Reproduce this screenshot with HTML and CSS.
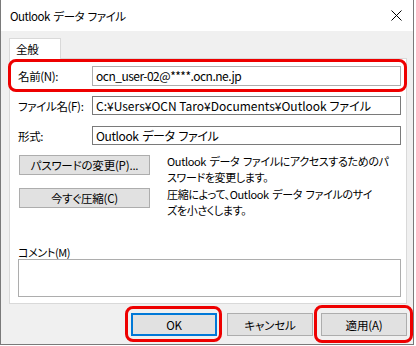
FILE: index.html
```html
<!DOCTYPE html>
<html lang="ja">
<head>
    <meta charset="UTF-8">
    <title>Outlook データ ファイル</title>
    <link rel="stylesheet" href="styles.css">
</head>
<body>
    <div class="window">
        <div class="titlebar">
            <span class="title">Outlook データ ファイル</span>
            <svg class="close" width="11" height="11" viewBox="0 0 11 11">
                <path d="M0.5 0.5 L10.5 10.5 M10.5 0.5 L0.5 10.5" stroke="#000" stroke-width="1" fill="none"/>
            </svg>
        </div>
        <div class="content">
            <div class="tabs">
                <div class="tab">全般</div>
            </div>
            <div class="panel">
                <div class="row marked">
                    <label class="label">名前(N):</label>
                    <div class="field field-name">ocn_user-02@****.ocn.ne.jp</div>
                </div>
                <div class="row row-file">
                    <label class="label">ファイル名(F):</label>
                    <div class="field">C:¥Users¥OCN Taro¥Documents¥Outlook ファイル</div>
                </div>
                <div class="row">
                    <label class="label">形式:</label>
                    <div class="field field-type">Outlook データ ファイル</div>
                </div>
                <div class="action">
                    <button class="btn btn-wide">パスワードの変更(P)...</button>
                    <p class="note">Outlook データ ファイルにアクセスするためのパ<br>スワードを変更します。</p>
                </div>
                <div class="action">
                    <button class="btn btn-wide">今すぐ圧縮(C)</button>
                    <p class="note">圧縮によって、Outlook データ ファイルのサイ<br>ズを小さくします。</p>
                </div>
                <div class="comment">
                    <label class="comment-label">コメント(M)</label>
                    <div class="textarea"></div>
                </div>
            </div>
            <div class="footer">
                <button class="btn btn-foot btn-default marked">OK</button>
                <button class="btn btn-foot">キャンセル</button>
                <button class="btn btn-foot marked">適用(A)</button>
            </div>
        </div>
    </div>
</body>
</html>
```

FILE: styles.css
```css
body {
    margin: 0;
    padding: 0;
    background-color: #ffffff;
    font-family: "Noto Sans CJK JP", sans-serif;
    font-feature-settings: "palt";
    font-size: 11px;
    letter-spacing: -0.35px;
    word-spacing: 1.5px;
    line-height: 16px;
    color: #000;
}

.window {
    width: 412px;
    height: 344px;
    border: 1px solid #7a7a7a;
    border-top: none;
    background-color: #f0f0f0;
    display: flex;
    flex-direction: column;
    overflow: hidden;
}

.titlebar {
    display: flex;
    justify-content: space-between;
    align-items: center;
    height: 31px;
    padding: 0 11px 0 9px;
    background-color: #fff;
    flex-shrink: 0;
}

.title {
    font-size: 11.5px;
    letter-spacing: -0.5px;
}

.content {
    display: flex;
    flex-direction: column;
    padding: 7px 6px 0 8px;
}

.tabs {
    display: flex;
    height: 20px;
}

.tab {
    width: 44px;
    padding-left: 6px;
    line-height: 20px;
    font-size: 11.5px;
    background-color: #fff;
    border: 1px solid #d9d9d9;
    border-bottom: none;
    position: relative;
    z-index: 1;
    margin-bottom: -1px;
}

.panel {
    display: flex;
    flex-direction: column;
    height: 246px;
    box-sizing: border-box;
    background-color: #fff;
    border: 1px solid #d9d9d9;
    padding: 7px 5px 0 8px;
}

.row {
    display: flex;
    align-items: center;
    margin-bottom: 10px;
    position: relative;
}

.row-file {
    margin-bottom: 11px;
}

.row.marked::after {
    content: '';
    position: absolute;
    left: -10px;
    right: -6px;
    top: -7px;
    bottom: -6px;
    border: 3px solid #ee0000;
    border-radius: 8px;
}

.label {
    width: 74px;
    flex-shrink: 0;
    white-space: nowrap;
    font-size: 11.5px;
}

.field {
    flex: 1;
    min-width: 0;
    height: 17px;
    line-height: 17px;
    font-size: 12px;
    letter-spacing: 0;
    word-spacing: 0;
    border: 1px solid #7a7a7a;
    padding: 0 3px;
    white-space: nowrap;
    overflow: hidden;
}

.field-name {
    height: 18px;
    line-height: 18px;
    letter-spacing: -0.5px;
    border-color: #adadad;
}

.field-type {
    letter-spacing: -0.4px;
    word-spacing: 1.5px;
}

.action {
    display: flex;
    align-items: flex-start;
    height: 33px;
}

.btn {
    font-family: inherit;
    font-feature-settings: "palt";
    font-size: 11.5px;
    letter-spacing: -0.2px;
    line-height: 16px;
    color: #000;
    background-color: #e1e1e1;
    border: 1px solid #adadad;
    padding: 0;
    position: relative;
}

.btn-wide {
    width: 131px;
    height: 20px;
    margin: 0 17px 0 1px;
    flex-shrink: 0;
}

.note {
    margin: -2px 0 0 0;
    white-space: nowrap;
}

.comment {
    display: flex;
    flex-direction: column;
    margin-top: 24px;
}

.comment-label {
    line-height: 14px;
}

.textarea {
    height: 36px;
    border: 1px solid #adadad;
}

.footer {
    display: flex;
    justify-content: flex-end;
    gap: 8px;
    padding: 9px 0 0 0;
}

.btn-foot {
    width: 86px;
    height: 23px;
}

.btn-default {
    border: 2px solid #0078d7;
    margin-right: 2px;
}

.btn.marked::after {
    content: '';
    position: absolute;
    left: -8px;
    right: -7px;
    top: -9px;
    bottom: -8px;
    border: 3px solid #ee0000;
    border-radius: 8px;
}
```
